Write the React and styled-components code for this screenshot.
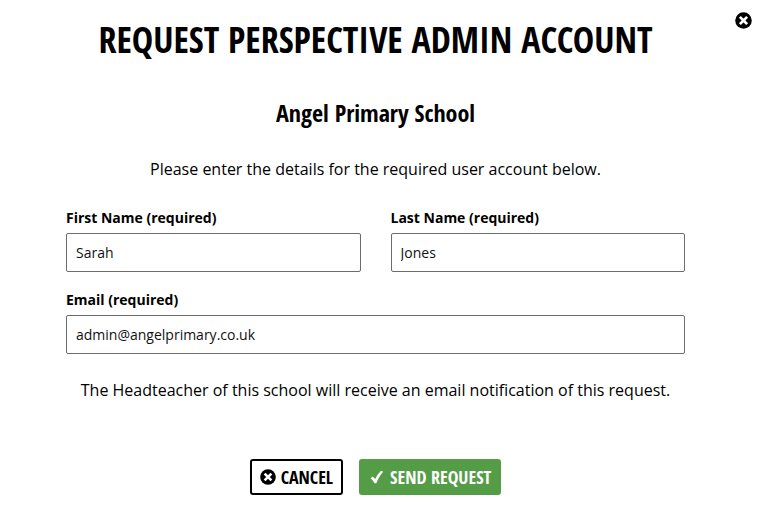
import React from "react";
import styled, { createGlobalStyle } from "styled-components";

const GlobalStyle = createGlobalStyle`
  *, *::before, *::after { box-sizing: border-box; }
  body {
    margin: 0;
    background: #fff;
    color: #000;
    font-family: "Open Sans", "Noto Sans", sans-serif;
    font-size: 16px;
    line-height: 24px;
  }
`;

const condensed = `"Open Sans Condensed", "Open Sans", sans-serif`;

const Dialog = styled.main`
  position: relative;
  padding: 16px 78px 12px 66px;
`;

const CloseButton = styled.button`
  position: absolute;
  top: 12px;
  right: 11px;
  display: flex;
  padding: 0;
  border: 0;
  background: none;
  color: #000;
  cursor: pointer;
`;

const Title = styled.h1`
  margin: 0;
  font: 700 36px/48px ${condensed};
  text-align: center;
  text-transform: uppercase;
`;

const School = styled.h2`
  margin: 33px 0 0;
  font: 700 24px/32px ${condensed};
  text-align: center;
`;

const Message = styled.p`
  margin: ${(p) => p.$top}px 0 0;
  text-align: center;
`;

const Form = styled.form`
  display: flex;
  flex-direction: column;
`;

const Fields = styled.div`
  display: grid;
  grid-template-columns: 1fr 1fr;
  gap: 17px 30px;
  margin-top: 26px;
`;

const Field = styled.div`
  display: flex;
  flex-direction: column;
  gap: 4px;
  min-width: 0;
  grid-column: ${(p) => (p.$wide ? "1 / -1" : "auto")};
`;

const Label = styled.label`
  font-size: 14px;
  font-weight: 700;
  line-height: 22px;
`;

const Input = styled.input`
  width: 100%;
  height: 39px;
  padding: 0 9px;
  border: 1px solid #6c6c6c;
  border-radius: 2px;
  background: #fff;
  color: #111;
  font: 400 14px/20px "Open Sans", "Noto Sans", sans-serif;
`;

const Actions = styled.div`
  display: flex;
  justify-content: center;
  gap: 16px;
  margin-top: 57px;
`;

const Button = styled.button`
  display: flex;
  align-items: center;
  gap: 5px;
  height: 36px;
  padding: 0 8px;
  border: 2px solid ${(p) => (p.$primary ? "#549c46" : "#000")};
  border-radius: 3px;
  background: ${(p) => (p.$primary ? "#549c46" : "#fff")};
  color: ${(p) => (p.$primary ? "#fff" : "#000")};
  font: 700 18px/24px ${condensed};
  text-transform: uppercase;
  cursor: pointer;
`;

function CrossCircle({ size }) {
  return (
    <svg width={size} height={size} viewBox="0 0 16 16" aria-hidden="true">
      <circle cx="8" cy="8" r="7.8" fill="currentColor" />
      <path d="M4.6 4.6l6.8 6.8M11.4 4.6l-6.8 6.8" stroke="#fff" strokeWidth="2.6" />
    </svg>
  );
}

function Tick() {
  return (
    <svg width="16" height="16" viewBox="0 0 16 16" aria-hidden="true">
      <path d="M1.6 9.2L3.8 7.4 6.2 9.9C7.8 6.9 9.6 4.3 11.9 1.8L14.2 2.8C11.3 6.2 9.1 9.8 7.3 14.2L5.5 14.2C4.5 12.2 3.2 10.6 1.6 9.2Z" fill="currentColor" />
    </svg>
  );
}

function TextField({ id, label, value, type = "text", wide }) {
  return (
    <Field $wide={wide}>
      <Label htmlFor={id}>{label}</Label>
      <Input id={id} name={id} type={type} defaultValue={value} required />
    </Field>
  );
}

export default function App() {
  return (
    <Dialog>
      <GlobalStyle />
      <CloseButton type="button" aria-label="Close">
        <CrossCircle size={17} />
      </CloseButton>
      <Title>Request Perspective Admin Account</Title>
      <School>Angel Primary School</School>
      <Message $top={28}>Please enter the details for the required user account below.</Message>
      <Form onSubmit={(e) => e.preventDefault()}>
        <Fields>
          <TextField id="firstName" label="First Name (required)" value="Sarah" />
          <TextField id="lastName" label="Last Name (required)" value="Jones" />
          <TextField id="email" label="Email (required)" type="email" value="admin@angelprimary.co.uk" wide />
        </Fields>
        <Message $top={24}>
          The Headteacher of this school will receive an email notification of this request.
        </Message>
        <Actions>
          <Button type="button">
            <CrossCircle size={16} />
            Cancel
          </Button>
          <Button type="submit" $primary>
            <Tick />
            Send Request
          </Button>
        </Actions>
      </Form>
    </Dialog>
  );
}
